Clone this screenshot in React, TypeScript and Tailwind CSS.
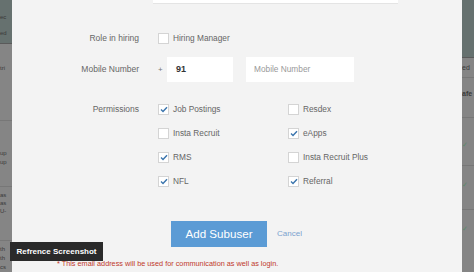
const FONT = "font-['Liberation_Sans',Arial,sans-serif]";

const perms: [string, boolean, string, boolean][] = [
  ["Job Postings", true, "Resdex", false],
  ["Insta Recruit", false, "eApps", true],
  ["RMS", true, "Insta Recruit Plus", false],
  ["NFL", true, "Referral", true],
];

function Box({ checked }: { checked: boolean }) {
  return (
    <span className="w-[11px] h-[11px] bg-white border border-[#d4d4d4] flex items-center justify-center shrink-0">
      {checked && (
        <svg width="8" height="7" viewBox="0 0 8 7">
          <path d="M1 3.6 L3 5.5 L7 1.2" fill="none" stroke="#3a74ad" strokeWidth="1.4" />
        </svg>
      )}
    </span>
  );
}

function Check({ label, checked }: { label: string; checked: boolean }) {
  return (
    <div className="flex items-center gap-[4px] h-[12px]">
      <Box checked={checked} />
      <span className="text-[8.3px] text-[#666]">{label}</span>
    </div>
  );
}

export default function App() {
  return (
    <div className={`w-[474px] h-[272px] flex overflow-hidden relative ${FONT}`}>
      {/* dimmed page on the left */}
      <div className="w-[12px] shrink-0 flex flex-col bg-[#858585] text-[6px] text-[#3a3a3a] overflow-hidden">
        <div className="h-[46px] bg-[#66716f] border-b border-[#5a5a5a] pt-[9px] leading-[16px]">
          <div>ec</div>
          <div>ed</div>
        </div>
        <div className="h-[80px] border-b border-[#777] pt-[20px]">tri</div>
        <div className="h-[68px] border-b border-[#777] pt-[28px] leading-[9px]">
          <div>up</div>
          <div>up</div>
        </div>
        <div className="h-[56px] border-b border-[#777] pt-[4px] leading-[8px]">
          <div>as</div>
          <div>as</div>
          <div>U-</div>
        </div>
        <div className="flex-1 pt-[4px] leading-[9px]">
          <div>th</div>
          <div>th</div>
          <div>cs</div>
        </div>
      </div>

      {/* modal */}
      <div className="w-[450px] shrink-0 bg-[#f3f3f3] flex flex-col">
        <div className="ml-[141px] w-[245px] h-[4px] bg-white border-b border-[#e4e4e4]" />

        <div className="grid grid-cols-[127px_1fr] gap-x-[19px] mt-[28px] h-[12px] items-center">
          <span className="text-right text-[8.5px] text-[#666]">Role in hiring</span>
          <Check label="Hiring Manager" checked={false} />
        </div>

        <div className="grid grid-cols-[127px_1fr] gap-x-[19px] mt-[13px] h-[25px] items-center">
          <span className="text-right text-[8.5px] text-[#666]">Mobile Number</span>
          <div className="flex items-center h-full">
            <span className="text-[8px] text-[#777] w-[9px]">+</span>
            <div className="w-[66px] h-full bg-white flex items-center pl-[9px] text-[9px] font-bold text-[#333]">91</div>
            <div className="ml-[13px] w-[108px] h-full bg-white flex items-center pl-[8px] text-[8.3px] text-[#999]">
              Mobile Number
            </div>
          </div>
        </div>

        <div className="grid grid-cols-[127px_1fr] gap-x-[19px] mt-[21px]">
          <span className="text-right text-[8.5px] text-[#666] h-[12px] leading-[12px]">Permissions</span>
          <div className="flex flex-col gap-[12px]">
            {perms.map(([a, ac, b, bc]) => (
              <div key={a} className="flex">
                <div className="w-[130px]">
                  <Check label={a} checked={ac} />
                </div>
                <Check label={b} checked={bc} />
              </div>
            ))}
          </div>
        </div>

        <div className="flex items-center ml-[159px] mt-[34px] gap-[10px]">
          <button className="w-[96px] h-[26px] bg-[#5b9bd5] text-white text-[11.6px]">Add Subuser</button>
          <span className="text-[8px] text-[#7aa2cf]">Cancel</span>
        </div>

        <div className="mt-[12px] pl-[45px] text-[7.3px] text-[#c0392b] leading-[10px]">
          * This email address will be used for communication as well as login.
        </div>
      </div>

      {/* dimmed page on the right */}
      <div className="flex-1 flex flex-col bg-[#858585] text-[7px] text-[#3a3a3a] overflow-hidden">
        <div className="h-[58px] bg-[#66716f] border-b border-[#5a5a5a]" />
        <div className="h-[20px] border-b border-[#777] pt-[6px] leading-[8px]">ed</div>
        <div className="h-[40px] border-b border-[#777] pt-[12px] leading-[8px] font-bold">
          <div>afe</div>
        </div>
        <div className="h-[48px] border-b border-[#777] pt-[22px] text-[#5a8a6a]">✓</div>
        <div className="h-[44px] border-b border-[#777] pt-[14px] text-[#5a8a6a]">✓</div>
        <div className="flex-1 pt-[14px] text-[#5a8a6a]">✓</div>
      </div>

      {/* tooltip */}
      <div className="absolute left-[10px] top-[242px] w-[93px] h-[19px] bg-[#2a2a2a] flex items-center justify-center text-white text-[8px] font-bold">
        Refrence Screenshot
      </div>
    </div>
  );
}
